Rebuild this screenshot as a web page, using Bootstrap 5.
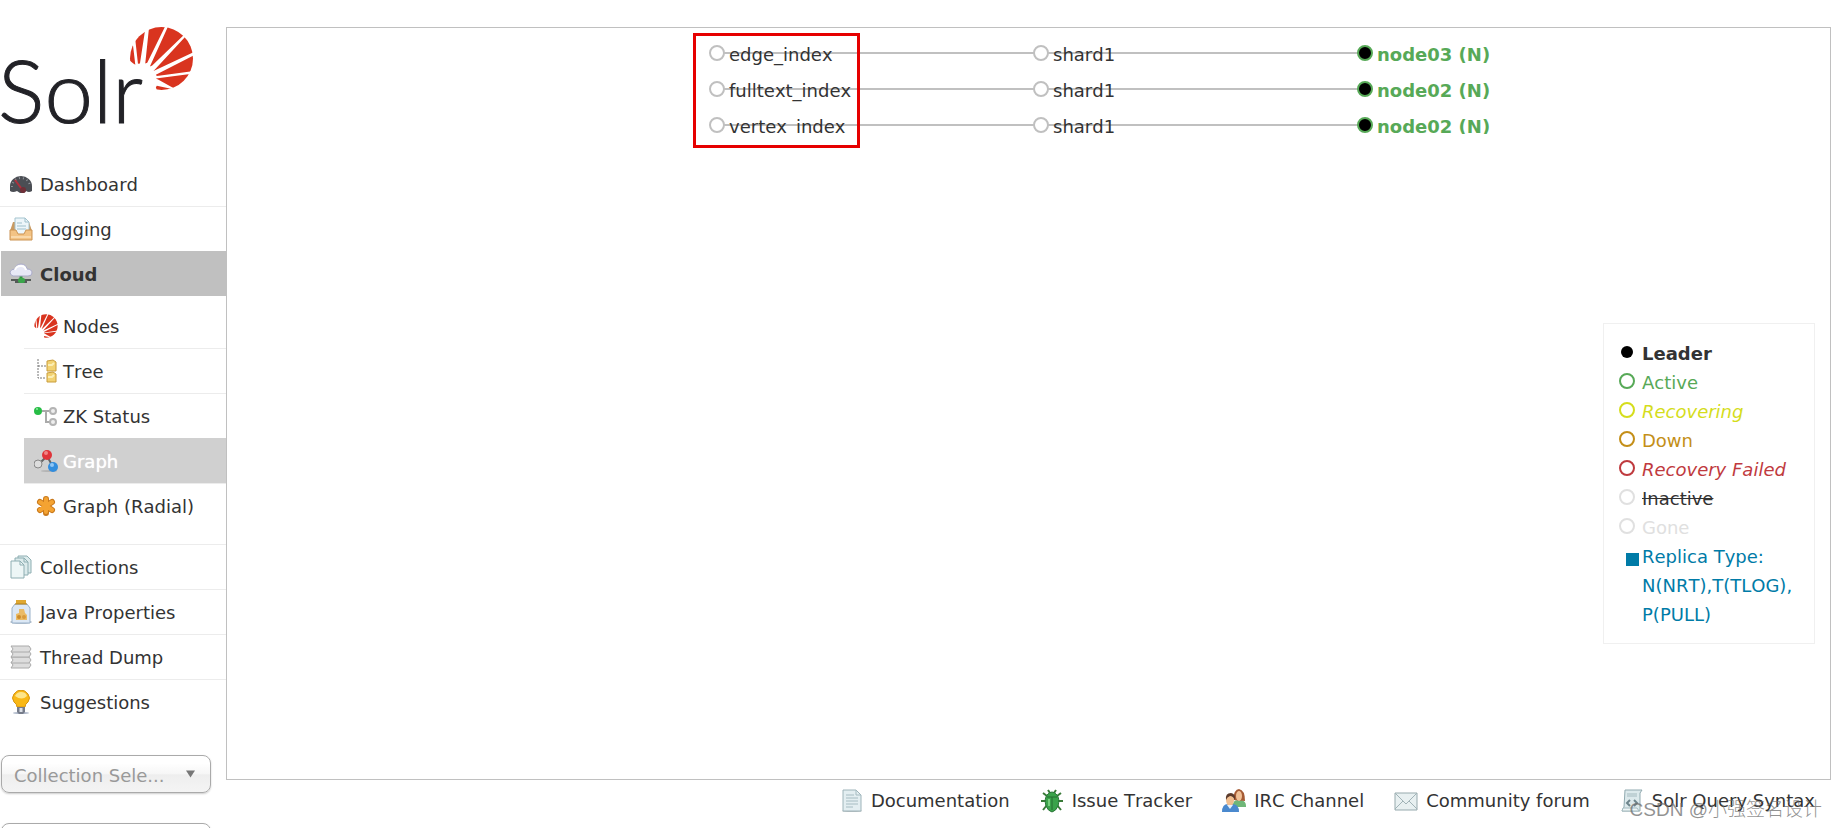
<!DOCTYPE html>
<html lang="en">
<head>
<meta charset="utf-8">
<meta name="viewport" content="width=device-width, initial-scale=1">
<title>Solr Admin</title>
<link href="https://cdn.jsdelivr.net/npm/bootstrap@5.3.0/dist/css/bootstrap.min.css" rel="stylesheet">
<style>
body { font-family: "DejaVu Sans", Verdana, sans-serif; font-size: 18px; line-height: 29px; font-kerning: none; color: #333; background: #fff; }
a { color: inherit; text-decoration: none; }
.side-col { width: 226px; padding-top: 26px; }
.logo { width: 200px; height: 100px; margin-bottom: 35px; }
.logo text { font-family: Lato, sans-serif; font-weight: 300; font-size: 87px; fill: #222227; stroke: #222227; stroke-width: 1; }
.menu-link { display: flex; align-items: center; gap: 7px; height: 45px; padding-left: 9px; border-top: 1px solid #ececec; white-space: nowrap; }
.menu-link svg, .foot svg { width: 24px; height: 24px; flex: none; }
.plain-top { border-top-color: transparent; }
.menu-link.current { background: #c0c0c0; border-top-color: #c0c0c0; font-weight: bold; margin-left: 1px; padding-left: 8px; }
.submenu { padding: 7px 0 16px 24px; }
.submenu .menu-link { gap: 5px; padding-left: 10px; }
.submenu .menu-link.shown { background: #d0d0d0; border-top-color: #d0d0d0; color: #fff; text-shadow: 0 0 1px #fff; }
.picker { appearance: none; width: 210px; height: 38px; margin: 31px 0 30px 1px; padding: 3px 12px 0; font-size: 18px; line-height: 24px; font-kerning: none; color: #999; border: 1px solid #aaa; border-radius: 8px;
  background: url("data:image/svg+xml,%3Csvg xmlns='http://www.w3.org/2000/svg' viewBox='0 0 10 8'%3E%3Cpath fill='%23777' d='M0 0h10L5 8z'/%3E%3C/svg%3E") no-repeat right 15px center / 9px 8px, linear-gradient(#fff 20%, #f6f6f6 50%, #eee 52%, #f4f4f4); box-shadow: 0 1px 2px rgba(0,0,0,.2); }
.picker + .picker { margin-top: 0; }
.content-col { padding: 27px 6px 0 0; }
.panel { border: 1px solid #c0c0c0; }
.graph-box { width: 930px; height: 106px; }
.graph-box text { font-size: 18px; fill: #333; }
.graph-box .replica { fill: #57a957; font-weight: bold; }
.graph-box line { stroke: #c0c0c0; stroke-width: 2; }
.graph-box circle { fill: #fff; stroke: #c0c0c0; stroke-width: 2; }
.graph-box .lead-dot { fill: #000; stroke: #57a957; }
.callout-frame { left: 129px; top: 5px; width: 167px; height: 115px; border: 3px solid #e60000; }
.legend { width: 212px; margin: 189px 15px 0 0; padding: 15px 0 14px; border: 1px solid #f0f0f0; }
.legend li { display: flex; padding-left: 15px; }
.legend svg { width: 16px; height: 16px; margin: 5px 7px 0 0; flex: none; }
.legend circle { fill: none; stroke: currentColor; stroke-width: 2; }
.legend .solid-dot { fill: currentColor; stroke: none; }
.foot { height: 48px; gap: 30px; padding: 6px 16px 0 0; }
.foot a { display: flex; align-items: center; gap: 8px; height: 29px; color: #333; white-space: nowrap; }
.watermark { right: 15px; bottom: 4px; font: 19px/28px "Liberation Sans", "Noto Sans CJK SC", sans-serif; font-weight: 300; color: rgba(110,110,110,.75); pointer-events: none; }
</style>
</head>
<body>
<svg class="position-absolute" width="0" height="0" aria-hidden="true">
  <clipPath id="disc"><circle cx="484" cy="175" r="95"/></clipPath>
  <symbol id="sun" viewBox="386 78 196 194">
    <g fill="#d9341f" clip-path="url(#disc)">
      <path d="M380 175L396 118L405 194L399 190zM403 100L439 60L419 190L413 191zM447 76L504 60L441 188L435 190zM512 60L560 96L456 196L449 199zM564 100L594 150L468 209L460 213zM596 158L592 211L470 228L467 224zM590 219L545 278L475 239L467 235zM530 270L476 290L467 262L470 257z"/>
    </g>
  </symbol>
</svg>
<div class="d-flex vh-100 overflow-hidden position-relative">
  <aside class="side-col flex-shrink-0">
    <a href="#" class="d-block" aria-label="Solr">
      <svg class="logo d-block" viewBox="0 0 200 100" role="img" overflow="visible">
        <text x="-2" y="97">Solr</text>
        <use href="#sun" x="129" y="0" width="65" height="65"/>
      </svg>
    </a>
    <nav>
      <ul class="list-unstyled mb-0">
        <li><a href="#" class="menu-link plain-top">
          <svg viewBox="0 0 24 24"><path d="M1 19V14a11 10 0 0 1 22 0v5q-3 2-6 0l-2 2h-4l-3-2q-4 2-7 0z" fill="#4b4e54"/><path d="M3 15a9 9 0 0 1 18 0" fill="none" stroke="#92969c" stroke-width="2" stroke-dasharray="1 3"/><path d="M6 8l9 12" stroke="#b0303c" stroke-width="2"/><circle cx="14" cy="18" r="3" fill="#703038"/></svg>
          Dashboard</a></li>
        <li><a href="#" class="menu-link">
          <svg viewBox="0 0 24 24"><path d="M4 5h16l3 9v9H1v-9z" fill="#c99a61"/><path d="M6 1h10l4 4v13H6z" fill="#edf6fa" stroke="#a5c4cf"/><path d="M16 1v4h4M8 6h5M8 9h9M8 12h9" fill="none" stroke="#9fc0cc"/><path d="M1 13h6l2 4h6l2-4h6v10H1z" fill="#f3c384" stroke="#cb9352"/><path d="M2 20h20" stroke="#f9d9ab" stroke-width="2"/></svg>
          Logging</a></li>
        <li><a href="#" class="menu-link current">
          <svg viewBox="0 0 24 24"><path d="M2 18h20M6 20h12" stroke="#555b58" stroke-width="2"/><path d="M12 13v5" stroke="#31963f" stroke-width="3"/><path d="M4 14q-3-1-3-4 1-3 5-3 1-5 6-5 5 0 6 5 5 0 5 4 0 3-4 3z" fill="#e7e8f6" stroke="#a9aac8"/><path d="M6 8q1-4 6-4 4 0 5 4" fill="none" stroke="#fff" stroke-width="2"/><rect x="9" y="16" width="7" height="5" rx="2" fill="#3aa64b"/></svg>
          Cloud</a>
          <ul class="list-unstyled submenu">
            <li><a href="#" class="menu-link plain-top"><svg><use href="#sun"/></svg>Nodes</a></li>
            <li><a href="#" class="menu-link">
              <svg viewBox="0 0 24 24"><path d="M4 0v19h8M4 7h8" fill="none" stroke="#777" stroke-dasharray="2 1"/><g fill="#f2d273" stroke="#c99d3c"><path d="M13 2l6-1 3 2v9h-9zM13 14l6-1 3 2v8h-9z"/></g><path d="M14 6h4l2-2M14 18h4l2-2" stroke="#fbeeb5" stroke-width="2" fill="none"/></svg>
              Tree</a></li>
            <li><a href="#" class="menu-link">
              <svg viewBox="0 0 24 24"><path d="M8 7h8M12 7v11h5" fill="none" stroke="#aaa" stroke-width="2"/><circle cx="4" cy="7" r="4" fill="#27bd46"/><circle cx="3" cy="5" r="1" fill="#91e8a1"/><g fill="#eee" stroke="#b4b4b4" stroke-width="2"><circle cx="19" cy="7" r="3"/><circle cx="19" cy="18" r="3"/></g></svg>
              ZK Status</a></li>
            <li><a href="#" class="menu-link shown">
              <svg viewBox="0 0 24 24"><ellipse cx="15" cy="22" rx="8" ry="1" fill="#b4b4b4"/><path d="M5 15l8-8 6 11" fill="none" stroke="#666" stroke-width="2"/><circle cx="13" cy="6" r="5" fill="#df343a"/><circle cx="12" cy="4" r="2" fill="#f08585"/><circle cx="4" cy="15" r="4" fill="#ddd" stroke="#888"/><circle cx="19" cy="18" r="5" fill="#328ddd"/><circle cx="18" cy="16" r="2" fill="#91c6f4"/></svg>
              Graph</a></li>
            <li><a href="#" class="menu-link">
              <svg viewBox="0 0 24 24"><path d="M12 5v14M6 8l12 8M6 16l12-8" stroke="#c9791c" stroke-width="6" stroke-linecap="round"/><path d="M12 5v13M6 8l12 8M6 16l12-8" stroke="#f4a332" stroke-width="4" stroke-linecap="round"/></svg>
              Graph (Radial)</a></li>
          </ul>
        </li>
        <li><a href="#" class="menu-link">
          <svg viewBox="0 0 24 24"><g fill="#dcebec" stroke="#8eaeb2"><path d="M9 1h9l4 4v13H9z"/><path d="M6 3h9l4 4v13H6z"/><path d="M2 6h9l4 4v13H2z" fill="#edf6f6"/><path d="M11 6v4h4M15 3v4h4" fill="none"/></g></svg>
          Collections</a></li>
        <li><a href="#" class="menu-link">
          <svg viewBox="0 0 24 24"><ellipse cx="12" cy="22" rx="11" ry="2" fill="#b9c3cd"/><path d="M6 4h12l3 4v15H3V8z" fill="#dce8f5" stroke="#9ab2ca"/><path d="M7 0h10v4H7z" fill="#dfa831"/><path d="M6 4h12" stroke="#b07e1c"/><path d="M7 20v-6l3-1V9h5l1 4 2 2v5z" fill="#eabb66"/><circle cx="10" cy="17" r="2" fill="#cd8c2c"/><circle cx="15" cy="17" r="2" fill="#d99a3c"/></svg>
          Java Properties</a></li>
        <li><a href="#" class="menu-link">
          <svg viewBox="0 0 24 24"><g fill="#ddd" stroke="#aaa"><path d="M2 17h18l2 3-2 3H2l2-3z"/><path d="M2 12h18l2 3-2 3H2l2-3z"/><path d="M2 6h18l2 3-2 3H2l2-3z"/><path d="M2 1h18l2 3-2 3H2l2-3z"/></g></svg>
          Thread Dump</a></li>
        <li><a href="#" class="menu-link">
          <svg viewBox="0 0 24 24"><ellipse cx="12" cy="23" rx="8" ry="1" fill="#aab4c6"/><path d="M8 17q0-3-3-5-3-4 0-8 3-4 7-4t7 4q3 4 0 8-3 2-3 5z" fill="#f9b816" stroke="#d69512"/><path d="M6 6q2-4 6-4 5 0 6 4-5 5-12 0z" fill="#fde58b"/><path d="M8 17h8v5l-2 2h-4l-2-2z" fill="#767c8a"/><path d="M12 18v4" stroke="#dce0e8" stroke-width="3"/></svg>
          Suggestions</a></li>
      </ul>
    </nav>
    <select class="picker d-block" aria-label="Collection Selector"><option>Collection Sele...</option></select>
    <select class="picker d-block" aria-label="Core Selector"><option>Core Selector</option></select>
  </aside>
  <div class="content-col d-flex flex-column flex-grow-1">
    <main class="panel flex-grow-1 d-flex flex-column">
      <div class="graph-box position-relative align-self-center">
        <svg class="d-block w-100 h-100" viewBox="0 0 930 106" overflow="hidden">
          <g>
            <line x1="153" y1="25" x2="801" y2="25"/>
            <circle cx="153" cy="25" r="7"/><circle cx="477" cy="25" r="7"/><circle class="lead-dot" cx="801" cy="25" r="7"/>
            <text x="165" y="33">edge_index</text><text x="489" y="33">shard1</text><text class="replica" x="813" y="33">node03 (N)</text>
          </g>
          <g>
            <line x1="153" y1="61" x2="801" y2="61"/>
            <circle cx="153" cy="61" r="7"/><circle cx="477" cy="61" r="7"/><circle class="lead-dot" cx="801" cy="61" r="7"/>
            <text x="165" y="69">fulltext_index</text><text x="489" y="69">shard1</text><text class="replica" x="813" y="69">node02 (N)</text>
          </g>
          <g>
            <line x1="153" y1="97" x2="801" y2="97"/>
            <circle cx="153" cy="97" r="7"/><circle cx="477" cy="97" r="7"/><circle class="lead-dot" cx="801" cy="97" r="7"/>
            <text x="165" y="105">vertex_index</text><text x="489" y="105">shard1</text><text class="replica" x="813" y="105">node02 (N)</text>
          </g>
        </svg>
        <div class="callout-frame position-absolute"></div>
      </div>
      <ul class="legend list-unstyled align-self-end mb-0">
        <li class="fw-bold"><svg viewBox="0 0 16 16" color="#000"><circle class="solid-dot" cx="8" cy="8" r="6"/></svg>Leader</li>
        <li style="color:#57a957"><svg viewBox="0 0 16 16"><circle cx="8" cy="8" r="7"/></svg>Active</li>
        <li class="fst-italic" style="color:#d5dd1c"><svg viewBox="0 0 16 16"><circle cx="8" cy="8" r="7"/></svg>Recovering</li>
        <li style="color:#c48f18"><svg viewBox="0 0 16 16"><circle cx="8" cy="8" r="7"/></svg>Down</li>
        <li class="fst-italic" style="color:#bf3a3e"><svg viewBox="0 0 16 16"><circle cx="8" cy="8" r="7"/></svg>Recovery Failed</li>
        <li><svg viewBox="0 0 16 16" color="#e0e0e0"><circle cx="8" cy="8" r="7"/></svg><s>Inactive</s></li>
        <li style="color:#e0e0e0"><svg viewBox="0 0 16 16"><circle cx="8" cy="8" r="7"/></svg>Gone</li>
        <li style="color:#007ba7"><svg viewBox="0 0 16 16" overflow="visible"><path d="M7 6h13v13H7z" fill="currentColor"/></svg><span>Replica Type:<br>N(NRT),T(TLOG),<br>P(PULL)</span></li>
      </ul>
    </main>
    <footer class="foot d-flex justify-content-end flex-shrink-0">
      <a href="#"><svg viewBox="0 0 24 24"><ellipse cx="13" cy="22" rx="10" ry="1" fill="#b8bfc0"/><path d="M4 1h13l5 5v16H4z" fill="#e3eef1" stroke="#9eb4ba"/><path d="M17 1v5h5M7 6h8M7 9h12M7 12h12M7 15h12M7 18h7" fill="none" stroke="#a6bcc2"/></svg>Documentation</a>
      <a href="#"><svg viewBox="0 0 24 24"><path d="M7 7L3 4M17 7l4-3M6 12H1M18 12h5M7 16l-4 5M17 16l4 5M10 4L8 1M14 4l2-3" stroke="#397a38" stroke-width="2"/><path d="M7 6q5-6 10 0 3 4 1 11-2 5-6 6-4-1-6-6-2-7 1-11z" fill="#3aa34a" stroke="#2a7538"/><path d="M7 8h10M12 8v13" stroke="#246c31"/><path d="M9 10v7" stroke="#74ce7a" stroke-width="2"/></svg>Issue Tracker</a>
      <a href="#"><svg viewBox="0 0 24 24"><path d="M11 18q-1-7 5-7h3q5 1 5 6v1z" fill="#6fb678"/><path d="M11 11q1-11 6-11 6 1 6 12z" fill="#a55b34"/><ellipse cx="17" cy="7" rx="3" ry="5" fill="#f0c096"/><path d="M0 23q0-8 6-8h4q7 0 7 8z" fill="#4a89ce"/><ellipse cx="8" cy="11" rx="4" ry="6" fill="#f1bf91"/><path d="M4 11q-1-7 5-7 5 1 4 7-2-4-5-4-3 1-4 4z" fill="#5b3b2c"/><path d="M5 16l3 4 3-4" fill="#e8f1fb"/></svg>IRC Channel</a>
      <a href="#"><svg viewBox="0 0 24 24"><path d="M1 4h22v17H1z" fill="#e8f0f1" stroke="#96a9ad"/><path d="M1 20l8-8M23 20l-8-8M1 4l11 11L23 4" fill="none" stroke="#a1b3b7"/></svg>Community forum</a>
      <a href="#"><svg viewBox="0 0 24 24"><path d="M5 1h17l-2 3v18H2l2-4z" fill="#dce9ec" stroke="#91aab0"/><path d="M3 19h14l2 3H2zM7 5h10M7 7h10" fill="#eef5f6" stroke="#a4babf"/><path d="M10 11l-3 3 3 3M14 11l3 3-3 3" fill="none" stroke="#6e858c" stroke-width="2"/></svg>Solr Query Syntax</a>
    </footer>
  </div>
  <div class="watermark position-absolute">CSDN @小强签名设计</div>
</div>
<script src="https://cdn.jsdelivr.net/npm/bootstrap@5.3.0/dist/js/bootstrap.bundle.min.js"></script>
</body>
</html>
